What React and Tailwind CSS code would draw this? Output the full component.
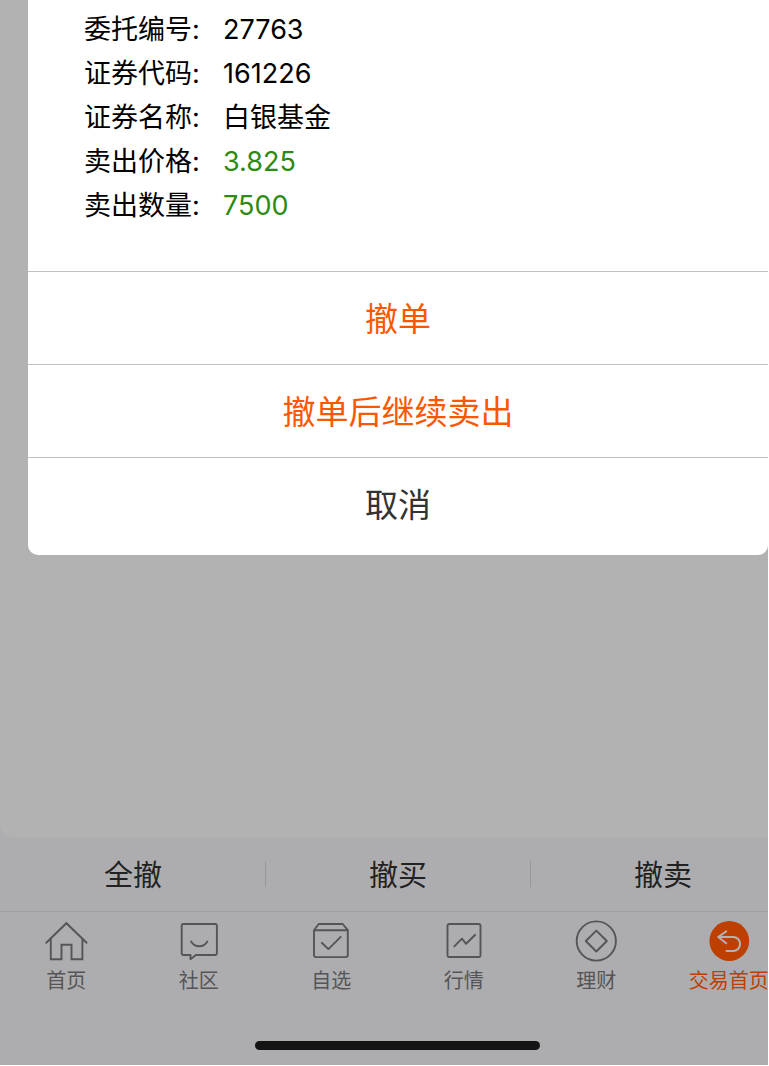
const orderFields = [
  { label: "委托编号", value: "27763", tone: "text-black" },
  { label: "证券代码", value: "161226", tone: "text-black" },
  { label: "证券名称", value: "白银基金", tone: "text-black" },
  { label: "卖出价格", value: "3.825", tone: "text-[#2d8a12]" },
  { label: "卖出数量", value: "7500", tone: "text-[#2d8a12]" },
];

const cancelActions = ["全撤", "撤买", "撤卖"];

function Icon({ children }) {
  return (
    <svg
      className="size-11"
      viewBox="0 0 44 44"
      fill="none"
      stroke="currentColor"
      strokeWidth="1.9"
      strokeLinecap="round"
      strokeLinejoin="round"
      aria-hidden="true"
    >
      {children}
    </svg>
  );
}

const tabs = [
  {
    label: "首页",
    icon: (
      <Icon>
        <path d="M2.3 23.8 22.4 4.2 42.6 23.8M6.8 20v20.3h10.7V25.8h10v14.5h10.9V20" strokeLinejoin="miter" />
      </Icon>
    ),
  },
  {
    label: "社区",
    icon: (
      <Icon>
        <path d="M6.4 5h31.8a1.7 1.7 0 0 1 1.7 1.7v27.6a1.7 1.7 0 0 1-1.7 1.7H18.9l-5.4 4.2V36H6.4a1.7 1.7 0 0 1-1.7-1.7V6.7A1.7 1.7 0 0 1 6.4 5Z" />
        <path d="M14.1 22.5c3.8 6.4 12.4 6.4 16.2 0" />
      </Icon>
    ),
  },
  {
    label: "自选",
    icon: (
      <Icon>
        <path d="M5 11.2 9.7 5h24l5.1 6.2v24.9a2 2 0 0 1-2 2H7a2 2 0 0 1-2-2V11.2ZM5 11.2h33.8" />
        <path d="m12.8 23.8 6.6 6.3 12.3-12.3" />
      </Icon>
    ),
  },
  {
    label: "行情",
    icon: (
      <Icon>
        <rect x="5.5" y="5" width="33" height="33" rx="1.8" />
        <path d="m12.3 27.4 7.6-7.7 4.2 5.1 9.1-9" />
      </Icon>
    ),
  },
  {
    label: "理财",
    icon: (
      <Icon>
        <circle cx="22.3" cy="22" r="19.6" />
        <path d="M22.3 11.6 32.8 22 22.3 32.5 11.8 22Z" />
      </Icon>
    ),
  },
  {
    label: "交易首页",
    active: true,
    icon: (
      <Icon>
        <circle cx="22.3" cy="22" r="19.9" fill="#bd4000" stroke="none" />
        <path
          d="m19.2 12.4-8 5.6 8 6.3M11.2 18h14.9a7 7 0 0 1 0 14h-6.6"
          stroke="#b2b2b4"
          strokeWidth="2"
        />
      </Icon>
    ),
  },
];

function OrderDialog() {
  return (
    <section
      role="dialog"
      aria-label="撤单"
      className="ml-7 rounded-b-[10px] bg-white pb-[5px]"
    >
      <dl className="px-14 pt-2 pb-[43px] text-[27px] leading-11 text-black">
        {orderFields.map((field) => (
          <div key={field.label} className="flex">
            <dt className="w-[139px]">{field.label}:</dt>
            <dd className={field.tone}>{field.value}</dd>
          </div>
        ))}
      </dl>
      <div className="flex flex-col text-[33px] text-[#fa5800]">
        <button type="button" className="h-[93px] border-t border-[#c0c0c0] pt-1">
          撤单
        </button>
        <button type="button" className="h-[93px] border-t border-[#c0c0c0] pt-1">
          撤单后继续卖出
        </button>
        <button type="button" className="h-[93px] border-t border-[#c0c0c0] pt-1 text-[#333333]">
          取消
        </button>
      </div>
    </section>
  );
}

export default function App() {
  return (
    <div
      lang="zh-CN"
      className="min-h-screen bg-white pr-px pb-px font-[Inter,'Noto_Sans_CJK_SC',sans-serif]"
    >
      <div className="flex min-h-[calc(100vh-1px)] flex-col overflow-hidden bg-[#adadaf]">
        <main className="flex-1 rounded-bl-xl bg-[#b2b2b2]">
          <OrderDialog />
        </main>
        <footer className="w-[calc(100%+27px)] shrink-0">
          <div className="grid h-[74px] grid-cols-3 items-center text-[29px] text-[#222222]">
            {cancelActions.map((action) => (
              <button
                key={action}
                type="button"
                className="h-[26px] border-l border-[#98989b] leading-[30px] first:border-transparent"
              >
                {action}
              </button>
            ))}
          </div>
          <nav className="grid grid-cols-6 border-t border-[#9f9fa2] pt-[7px] text-xl text-[#555557]">
            {tabs.map((tab) => (
              <a
                key={tab.label}
                href="#"
                className={
                  tab.active
                    ? "flex flex-col items-center gap-0.5 text-[#bd4000]"
                    : "flex flex-col items-center gap-0.5"
                }
              >
                {tab.icon}
                <span className="leading-8">{tab.label}</span>
              </a>
            ))}
          </nav>
          <div className="flex justify-center pt-11 pb-[15px]">
            <div className="h-[9px] w-[285px] rounded-full bg-[#141414]" />
          </div>
        </footer>
      </div>
    </div>
  );
}
